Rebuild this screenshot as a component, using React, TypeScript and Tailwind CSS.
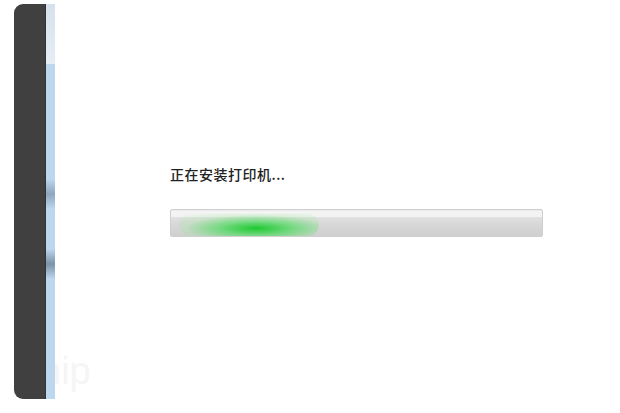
export default function App() {
  return (
    <div className="w-[620px] h-[413px] bg-white flex overflow-hidden relative" style={{ fontFamily: '"Noto Sans CJK SC", "Noto Sans", sans-serif' }}>
      <div className="absolute left-[40px] top-[352px] text-[38px] text-[#f5f5f5] leading-none" style={{ fontFamily: '"Liberation Sans", sans-serif' }}>hip</div>
      <div className="pt-[4px] pl-[14px] flex relative">
        <div className="w-[32px] h-[395px] bg-[#404040] rounded-tl-[9px] rounded-bl-[9px] border-r border-[#333]" />
        <div className="w-[9px] h-[395px] flex flex-col bg-[#bcd7ee]">
          <div className="h-[60px] bg-gradient-to-b from-[#d4e1ec] to-[#e6eef5]" />
          <div className="h-[115px]" />
          <div className="h-[30px] bg-gradient-to-b from-[#bcd7ee] via-[#8ea7bd] to-[#bcd7ee]" />
          <div className="h-[40px]" />
          <div className="h-[30px] bg-gradient-to-b from-[#bcd7ee] via-[#7d93a6] to-[#bcd7ee]" />
        </div>
      </div>
      <div className="flex-1 pl-[115px] pt-[164px]">
        <div className="text-[14px] tracking-[0.5px] font-medium text-[#222] leading-[20px]">正在安装打印机...</div>
        <div className="mt-[25px] w-[373px] h-[28px] rounded-[2px] border border-[#cfcfcf] bg-gradient-to-b from-[#ececec] via-[#d9d9d9] to-[#cfcfcf] relative overflow-hidden">
          <div className="absolute top-[1px] left-0 right-0 h-[6px] bg-[#f3f3f3]" />
          <div className="absolute left-[8px] top-[4px] w-[140px] h-[22px] rounded-full" style={{ background: 'radial-gradient(ellipse at 55% 65%, rgba(20,200,40,0.95) 0%, rgba(60,220,80,0.6) 35%, rgba(150,230,150,0.25) 65%, rgba(200,230,200,0) 100%)' }} />
        </div>
      </div>
    </div>
  );
}
